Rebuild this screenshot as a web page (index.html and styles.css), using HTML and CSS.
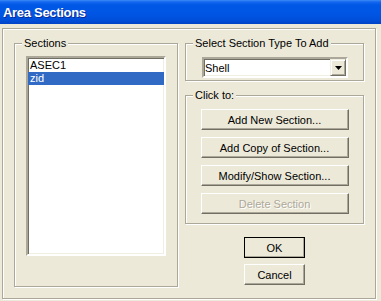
FILE: index.html
```html
<!DOCTYPE html>
<html lang="en">
<head>
    <meta charset="UTF-8">
    <title>Area Sections</title>
    <link rel="stylesheet" href="styles.css">
</head>
<body>
    <div class="window">
        <div class="titlebar">
            <span class="title">Area Sections</span>
        </div>

        <div class="panel">
            <!-- Left: list of defined sections -->
            <fieldset class="group group-sections">
                <legend>Sections</legend>
                <ul class="listbox">
                    <li>ASEC1</li>
                    <li class="selected">zid</li>
                </ul>
            </fieldset>

            <!-- Right: type picker, actions, dialog buttons -->
            <div class="side">
                <fieldset class="group group-type">
                    <legend>Select Section Type To Add</legend>
                    <div class="combo">
                        <span class="combo-value">Shell</span>
                        <span class="combo-btn">
                            <svg width="7" height="4" viewBox="0 0 7 4"><path d="M0 0h7L3.5 4z" fill="#000"/></svg>
                        </span>
                    </div>
                </fieldset>

                <fieldset class="group group-click">
                    <legend>Click to:</legend>
                    <button class="btn wide">Add New Section...</button>
                    <button class="btn wide">Add Copy of Section...</button>
                    <button class="btn wide">Modify/Show Section...</button>
                    <button class="btn wide" disabled>Delete Section</button>
                </fieldset>

                <button class="btn small default">OK</button>
                <button class="btn small">Cancel</button>
            </div>
        </div>
    </div>
</body>
</html>
```

FILE: styles.css
```css
* {
    box-sizing: border-box;
}

body {
    margin: 0;
    background: #ECE9D8;
    color: #000;
    font-family: "Liberation Sans", Arial, sans-serif;
    font-size: 11px;
}

.window {
    width: 381px;
    height: 301px;
    background: #ECE9D8;
    display: flex;
    flex-direction: column;
}

/* XP style caption */
.titlebar {
    flex: none;
    height: 24px;
    display: flex;
    align-items: center;
    padding-left: 3px;
    background: linear-gradient(to bottom, #3A8CF7 0px, #1466EE 2px, #0058E6 5px, #0055E4 60%, #004ED8 85%, #0043C6 100%);
}

.title {
    color: #fff;
    font-weight: bold;
    font-size: 13px;
    letter-spacing: -0.3px;
    text-shadow: 1px 1px 0 #0A2A9A;
}

/* Etched frame around the dialog content */
.panel {
    flex: none;
    margin: 4px 5px 2px 2px;
    height: 271px;
    display: flex;
    gap: 7px;
    padding: 8px 11px 0 11px;
    border: 1px solid #ACA899;
    box-shadow: inset 1px 1px 0 #fff, 1px 1px 0 #fff;
}

/* legends are indented by the fieldset padding, so keep it at 0
   and offset the contents with margins instead */
.group {
    margin: 0;
    padding: 0;
    min-inline-size: 0;
    border: 1px solid #ACA899;
    box-shadow: inset 1px 1px 0 #fff, 1px 1px 0 #fff;
}

.group legend {
    margin-left: 7px;
    padding: 0 2px;
    line-height: 13px;
    background: #ECE9D8;
}

.group-sections {
    width: 164px;
    height: 250px;
}

.listbox {
    list-style: none;
    margin: 6px 0 0 11px;
    padding: 1px 0 0 0;
    width: 140px;
    height: 200px;
    background: #fff;
    border: 2px solid;
    border-color: #ACA899 #fff #fff #ACA899;
    box-shadow: inset 1px 1px 0 #716F64, inset -1px -1px 0 #F1EFE2;
}

.listbox li {
    height: 13px;
    line-height: 13px;
    padding-left: 2px;
}

.listbox li.selected {
    background: #316AC5;
    color: #fff;
}

.side {
    width: 179px;
    display: flex;
    flex-direction: column;
    align-items: center;
}

.side .group {
    align-self: stretch;
}

.group-type {
    height: 44px;
}

.combo {
    width: 146px;
    height: 21px;
    margin: 7px 0 0 16px;
    display: flex;
    align-items: center;
    justify-content: space-between;
    background: #fff;
    border: 2px solid;
    border-color: #ACA899 #fff #fff #ACA899;
    box-shadow: inset 1px 1px 0 #716F64, inset -1px -1px 0 #F1EFE2;
}

.combo-value {
    padding-left: 1px;
}

.combo-btn {
    width: 16px;
    height: 17px;
    display: flex;
    align-items: center;
    justify-content: center;
    background: #ECE9D8;
    border: 1px solid;
    border-color: #F1EFE2 #716F64 #716F64 #F1EFE2;
    box-shadow: inset 1px 1px 0 #fff, inset -1px -1px 0 #ACA899;
}

.group-click {
    margin-top: 8px;
    height: 135px;
    padding-top: 7px;
    display: flex;
    flex-direction: column;
    align-items: center;
    gap: 7px;
}

.btn {
    height: 21px;
    padding: 0;
    font: inherit;
    color: #000;
    background: #ECE9D8;
    border: 1px solid;
    border-color: #fff #716F64 #716F64 #fff;
    box-shadow: inset -1px -1px 0 #ACA899;
    border-radius: 0;
}

.btn.wide {
    width: 148px;
}

.btn.small {
    width: 61px;
}

.btn.default {
    margin-top: 13px;
    margin-bottom: 6px;
    outline: 1px solid #000;
    outline-offset: -1px;
}

.btn:disabled {
    color: #ACA899;
    text-shadow: 1px 1px 0 #fff;
}
```
